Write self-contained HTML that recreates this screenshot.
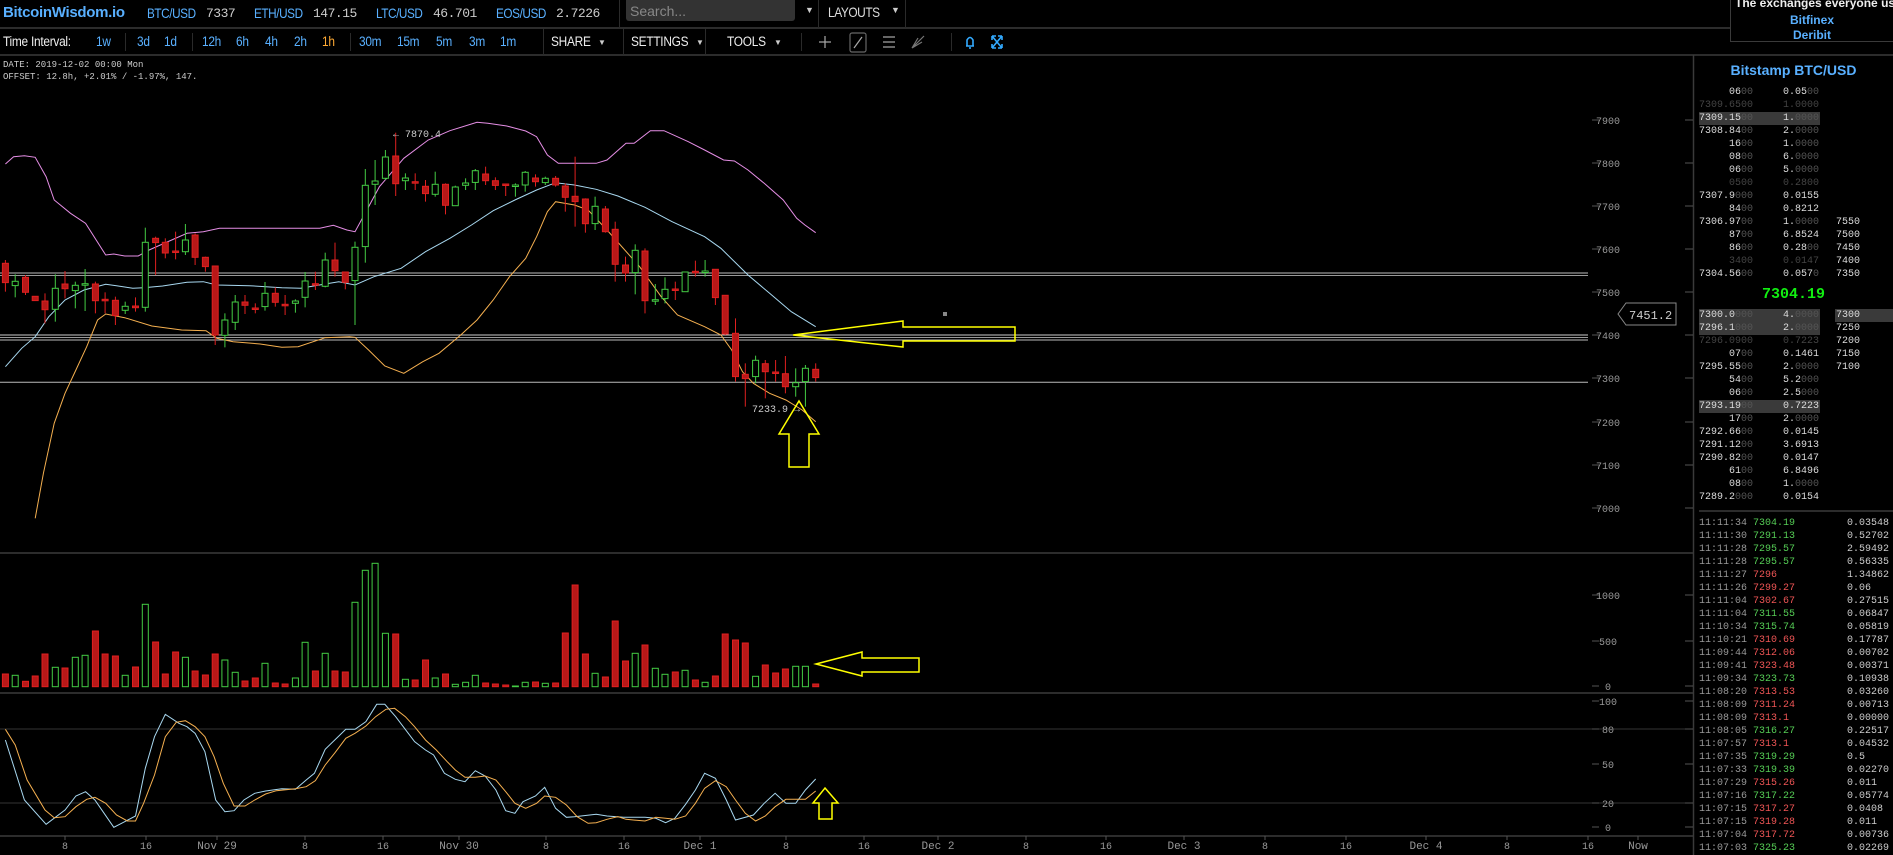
<!DOCTYPE html>
<html><head><meta charset="utf-8"><style>
html,body{margin:0;padding:0;background:#000;width:1893px;height:855px;overflow:hidden}
body{position:relative;font-family:"Liberation Sans",sans-serif;color:#ddd}
.a{position:absolute;white-space:pre}
.t{font-size:14px;top:5px;color:#59b0ff;letter-spacing:-0.5px;transform:scaleX(.84);transform-origin:left}
.m{font-family:"Liberation Mono",monospace;color:#ccc;font-size:13px;letter-spacing:-0.5px}
.tb{font-size:13.5px;top:34px;color:#59b0ff;letter-spacing:-0.3px;transform:scaleX(.88);transform-origin:left}
.w{color:#eee}
.dv{position:absolute;width:1px;background:#2a2a2a}
.ob{position:absolute;font-family:"Liberation Mono",monospace;font-size:10px;line-height:13px;white-space:pre;color:#ddd}
.d{color:#555}
.dd{color:#444}
.hl{background:#3a3a3a}
.g{color:#4c4}.r{color:#e44}
</style></head><body>
<svg id="s" width="1893" height="855" style="position:absolute;left:0;top:0" xmlns="http://www.w3.org/2000/svg">
<g stroke="#3a3a3a" stroke-width="1.5">
<line x1="0" y1="28" x2="1730" y2="28"/>
<line x1="0" y1="55" x2="1893" y2="55"/>
<line x1="1693.5" y1="55" x2="1693.5" y2="855"/>
<line x1="0" y1="553" x2="1693" y2="553"/>
<line x1="0" y1="693" x2="1693" y2="693"/>
<line x1="0" y1="836" x2="1693" y2="836"/>
<line x1="1699" y1="511" x2="1893" y2="511"/>
</g>
<g stroke="#333" stroke-width="1">
<line x1="0" y1="729" x2="1693" y2="729"/>
<line x1="0" y1="803" x2="1693" y2="803"/>
</g>
<g id="ax" font-family="Liberation Mono,monospace" font-size="10" fill="#999" text-anchor="middle"></g>
<g id="hl" fill="none"></g>
<g id="ln" fill="none" stroke-width="1"></g>
<g id="cd"></g>
<g id="vl"></g>
<g id="ind" fill="none" stroke-width="1"></g>
<g fill="none" stroke="#ff0" stroke-width="1.5">
<polygon points="793,335 903,321 903,327 1015,327 1015,341 903,341 903,347"/>
<polygon points="799,401 819,434 809,434 809,467 789,467 789,434 779,434"/>
<polygon points="816,664 862,652 862,658 919,658 919,672 862,672 862,676"/>
<polygon points="825,788 838,803 832,803 832,819 819,819 819,803 813,803"/>
</g>
<rect x="943" y="312" width="4" height="4" fill="#888"/>
<g font-family="Liberation Mono,monospace" font-size="10" fill="#ccc">
<text x="393" y="137">← 7870.4</text>
<text x="752" y="412">7233.9 →</text>
</g>
<polygon points="1618,314 1626,303 1676,303 1676,325 1626,325" fill="#000" stroke="#888"/>
<text x="1629" y="319" font-family="Liberation Mono,monospace" font-size="12" fill="#ccc">7451.2</text>
<g stroke="#aaa" stroke-width="1.2" fill="none">
<line x1="825" y1="36" x2="825" y2="48"/><line x1="819" y1="42" x2="831" y2="42"/>
<rect x="850" y="33" width="16" height="19" rx="2" stroke="#666"/><line x1="854" y1="48" x2="862" y2="37"/>
<line x1="883" y1="37" x2="895" y2="37"/><line x1="883" y1="42" x2="895" y2="42"/><line x1="883" y1="47" x2="895" y2="47"/>
<path d="M912 48 L924 36 M912 48 L922 42 M912 48 L918 38" stroke="#777"/>
</g>
<g stroke="#3af" stroke-width="1.6" fill="none">
<path d="M966 46 L974 46 M967 46 L967 40 Q970 35 973 40 L973 46 M970 47 L970 49"/>
<path d="M992 36 L1002 48 M1002 36 L992 48 M992 36 h4 M992 36 v4 M1002 36 h-4 M1002 36 v4 M992 48 h4 M992 48 v-4 M1002 48 h-4 M1002 48 v-4"/>
</g>
</svg>

<div class="a" style="left:3px;top:4px;font-size:15px;font-weight:bold;color:#59b0ff;letter-spacing:-0.3px">BitcoinWisdom.io</div>
<div class="a t" style="left:147px">BTC/USD</div><div class="a m" style="left:206px;top:6px">7337</div>
<div class="a t" style="left:254px">ETH/USD</div><div class="a m" style="left:313px;top:6px">147.15</div>
<div class="a t" style="left:376px">LTC/USD</div><div class="a m" style="left:433px;top:6px">46.701</div>
<div class="a t" style="left:496px">EOS/USD</div><div class="a m" style="left:556px;top:6px">2.7226</div>
<div class="a" style="left:626px;top:0;width:169px;height:21px;background:#333;border-radius:0 0 3px 3px"></div>
<div class="a" style="left:630px;top:3px;font-size:14px;color:#888">Search...</div>
<div class="dv" style="left:619px;top:0;height:28px"></div>
<div class="a" style="left:805px;top:5px;font-size:9px;color:#ccc">▼</div>
<div class="dv" style="left:818px;top:0;height:28px"></div>
<div class="a" style="left:828px;top:4px;font-size:14px;color:#ddd;letter-spacing:-0.5px;transform:scaleX(.85);transform-origin:left">LAYOUTS</div>
<div class="a" style="left:891px;top:5px;font-size:9px;color:#ccc">▼</div>
<div class="dv" style="left:905px;top:0;height:28px"></div>
<div class="a" style="left:1730px;top:0;width:162px;height:41px;border:1px solid #3a3a3a;border-top:none;background:#000;overflow:hidden">
<div style="position:absolute;left:4px;top:-4px;font-size:12px;font-weight:bold;color:#eee;white-space:nowrap">The exchanges everyone us</div>
<div style="position:absolute;left:0;width:162px;top:13px;text-align:center;font-size:12px;font-weight:bold;color:#59b0ff">Bitfinex</div>
<div style="position:absolute;left:0;width:162px;top:28px;text-align:center;font-size:12px;font-weight:bold;color:#59b0ff">Deribit</div>
</div>

<div class="a tb w" style="left:3px">Time Interval:</div>
<div class="a tb" style="left:96px">1w</div><div class="dv" style="left:125px;top:33px;height:18px"></div>
<div class="a tb" style="left:137px">3d</div><div class="a tb" style="left:164px">1d</div><div class="dv" style="left:192px;top:33px;height:18px"></div>
<div class="a tb" style="left:202px">12h</div><div class="a tb" style="left:236px">6h</div><div class="a tb" style="left:265px">4h</div><div class="a tb" style="left:294px">2h</div><div class="a tb" style="left:322px;color:#fa3">1h</div>
<div class="dv" style="left:350px;top:33px;height:18px"></div>
<div class="a tb" style="left:359px">30m</div><div class="a tb" style="left:397px">15m</div><div class="a tb" style="left:436px">5m</div><div class="a tb" style="left:469px">3m</div><div class="a tb" style="left:500px">1m</div>
<div class="dv" style="left:543px;top:29px;height:26px"></div>
<div class="a tb w" style="left:551px">SHARE</div><div class="a" style="left:598px;top:38px;font-size:8px;color:#ccc">▼</div>
<div class="dv" style="left:623px;top:29px;height:26px"></div>
<div class="a tb w" style="left:631px">SETTINGS</div><div class="a" style="left:696px;top:38px;font-size:8px;color:#ccc">▼</div>
<div class="dv" style="left:705px;top:29px;height:26px"></div>
<div class="a tb w" style="left:727px">TOOLS</div><div class="a" style="left:774px;top:38px;font-size:8px;color:#ccc">▼</div>
<div class="dv" style="left:801px;top:33px;height:18px"></div>
<div class="dv" style="left:951px;top:33px;height:18px"></div>

<div class="a" style="left:3px;top:59px;font-family:'Liberation Mono',monospace;font-size:9px;color:#ccc;line-height:12px">DATE: 2019-12-02 00:00 Mon
OFFSET: 12.8h, +2.01% / -1.97%, 147.</div>

<div class="a" style="left:1694px;width:199px;top:62px;text-align:center;font-size:14px;font-weight:bold;color:#59b0ff">Bitstamp BTC/USD</div>
<div class="a" style="left:1694px;width:199px;top:286px;text-align:center;font-family:'Liberation Mono',monospace;font-size:15px;font-weight:bold;color:#1e1">7304.19</div>
<div id="ob"></div>

<script>
var NS="http://www.w3.org/2000/svg";
function el(p,t,a){var e=document.createElementNS(NS,t);for(var k in a)e.setAttribute(k,a[k]);document.getElementById(p).appendChild(e);return e;}
function tx(p,x,y,s,a){var e=el(p,'text',Object.assign({x:x,y:y},a||{}));e.textContent=s;}
var py=[[7900,120],[7800,163],[7700,206],[7600,249],[7500,292],[7400,335],[7300,378],[7200,422],[7100,465],[7000,508],
[1000,595],[500,641],[0,686],[100,701],[80,729],[50,764],[20,803],[0,827]];
py.forEach(function(v){tx('ax',1608,v[1]+4,String(v[0]));el('ax','line',{x1:1592,x2:1599,y1:v[1],y2:v[1],stroke:'#555'});el('ax','line',{x1:1685,x2:1693,y1:v[1],y2:v[1],stroke:'#555'});});
var tl=[[65,'8'],[146,'16'],[217,'Nov 29'],[305,'8'],[383,'16'],[459,'Nov 30'],[546,'8'],[624,'16'],[700,'Dec 1'],[786,'8'],[864,'16'],[938,'Dec 2'],[1026,'8'],[1106,'16'],[1184,'Dec 3'],[1265,'8'],[1346,'16'],[1426,'Dec 4'],[1507,'8'],[1588,'16'],[1638,'Now']];
tl.forEach(function(v){tx('ax',v[0],849,v[1],{'font-size':v[1].length>2?11:10});el('ax','line',{x1:v[0],x2:v[0],y1:836,y2:840,stroke:'#555'});});
[[273,'#bbb'],[275.5,'#999'],[335,'#ccc'],[337.5,'#999'],[340,'#bbb'],[382.3,'#bbb']].forEach(function(v){el('hl','line',{x1:0,x2:1588,y1:v[0],y2:v[0],stroke:v[1],'stroke-width':1});});
function pl(g,pts,col,oy){var s=pts.map(function(p){return (p[0]/1.845).toFixed(1)+','+(oy+p[1]/3).toFixed(1)}).join(' ');el(g,'polyline',{points:s,stroke:col});}
pl('ln',[[10,222],[25,200],[45,197],[65,202],[85,260],[100,330],[130,370],[158,400],[195,495],[210,492],[230,498],[255,498],[275,480],[300,462],[345,430],[375,425],[405,415],[500,415],[590,415],[615,406],[640,420],[655,425],[675,365],[700,290],[745,205],[790,150],[830,122],[880,97],[900,100],[935,108],[970,123],[990,140],[1010,195],[1030,220],[1100,220],[1120,210],[1155,160],[1170,160],[1200,122],[1225,122],[1270,155],[1300,180],[1335,210],[1355,213],[1380,240],[1410,280],[1445,330],[1470,385],[1485,405],[1505,428]],'#e58ee5',90);
pl('ln',[[10,830],[40,775],[65,740],[90,680],[120,630],[155,600],[195,583],[215,587],[245,595],[265,593],[300,588],[345,577],[375,575],[400,585],[460,587],[520,593],[555,595],[600,582],[625,575],[655,585],[690,560],[740,535],[785,485],[830,445],[870,405],[910,362],[950,330],[990,300],[1025,278],[1060,285],[1100,298],[1140,318],[1190,352],[1240,395],[1300,440],[1330,475],[1380,555],[1420,610],[1460,665],[1505,710]],'#a8d8f0',90);
pl('ln',[[65,1285],[80,1150],[100,1000],[120,910],[140,840],[160,770],[180,690],[195,672],[230,683],[280,708],[335,720],[380,722],[400,745],[430,755],[480,762],[520,772],[550,770],[600,743],[645,740],[655,742],[680,780],[710,828],[745,850],[780,815],[810,790],[850,735],[880,690],[910,630],[940,560],[970,505],[990,440],[1010,365],[1025,335],[1060,345],[1085,360],[1120,420],[1180,530],[1220,620],[1250,675],[1300,710],[1330,735],[1350,780],[1370,845],[1390,880],[1420,910],[1450,930],[1480,960],[1505,995]],'#f5b050',90);
var C=[[10,'r',520,578,510,605],[28,'g',574,587,553,622],[47,'r',562,607,555,615],[65,'r',619,632,619,632],[83,'r',633,659,610,700],[102,'g',595,658,553,695],[120,'r',582,596,543,625],[139,'g',586,602,575,655],[157,'g',581,583,537,663],[176,'r',582,632,575,670],[194,'r',628,630,607,670],[213,'r',631,677,620,705],[231,'g',649,661,635,672],[250,'r',648,653,622,665],[268,'g',457,652,413,665],[287,'r',445,458,440,555],[305,'r',457,489,445,505],[324,'r',483,485,425,508],[342,'g',450,485,402,495],[360,'r',435,502,430,525],[379,'r',502,530,500,545],[397,'r',528,735,528,765],[415,'g',690,736,670,772],[434,'g',636,697,615,720],[452,'r',636,646,615,672],[471,'r',654,656,640,670],[489,'g',610,650,576,662],[508,'r',610,637,592,650],[526,'r',643,645,615,675],[545,'g',633,640,628,668],[563,'g',573,622,546,652],[582,'r',581,585,545,600],[600,'g',510,589,488,592],[618,'r',510,542,458,560],[637,'r',546,577,545,598],[655,'g',472,572,455,705],[674,'g',286,470,237,518],[692,'g',273,283,210,345],[711,'g',201,265,180,270],[730,'r',198,281,128,318],[748,'g',264,272,250,300],[766,'r',275,277,250,300],[785,'r',289,311,270,335],[803,'g',283,313,245,320],[822,'r',283,346,280,373],[840,'g',291,347,287,348],[859,'g',279,286,265,300],[877,'g',242,277,237,300],[896,'r',252,272,230,285],[914,'r',272,286,262,300],[933,'r',282,284,282,318],[951,'g',285,287,280,320],[969,'g',247,285,243,305],[988,'r',264,275,253,290],[1006,'g',265,278,260,285],[1025,'r',265,285,258,290],[1043,'r',288,322,280,365],[1061,'r',319,335,200,410],[1080,'r',327,401,325,428],[1098,'g',349,401,320,420],[1117,'r',357,425,348,428],[1135,'r',418,523,395,575],[1154,'r',525,549,500,575],[1172,'g',481,548,463,613],[1190,'r',483,632,475,670],[1209,'g',629,632,582,645],[1227,'g',598,626,562,640],[1246,'r',597,599,575,630],[1264,'g',546,605,545,606],[1283,'r',544,546,512,560],[1301,'g',543,545,510,560],[1320,'r',538,623,538,645],[1338,'r',616,732,616,735],[1357,'r',730,860,685,875],[1375,'r',853,866,820,950],[1394,'g',811,860,797,880],[1412,'r',821,845,810,925],[1431,'r',846,848,810,875],[1449,'r',851,890,798,910],[1468,'g',878,890,835,920],[1486,'g',835,875,825,950],[1505,'r',838,863,820,875]];
var V=[372,376,394,378,312,352,354,322,316,243,312,318,376,351,163,276,372,306,322,363,375,312,330,367,393,384,340,399,402,384,277,363,310,363,366,157,61,40,250,252,388,390,330,384,372,403,397,376,399,402,405,408,397,396,400,399,249,105,312,370,381,213,333,310,285,355,373,366,361,390,397,378,252,270,279,379,345,369,357,349,349,402];
C.forEach(function(c,i){var x=c[0]/1.845,st=c[1]=='g'?'#4c4':'#e02020';
var yt=90+c[2]/3,yb=90+c[3]/3,wt=90+c[4]/3,wb=90+c[5]/3;if(yb-yt<1.5)yb=yt+1.5;
el('cd','line',{x1:x.toFixed(1),x2:x.toFixed(1),y1:wt,y2:wb,stroke:st,'stroke-width':1});
el('cd','rect',{x:(x-3).toFixed(1),y:yt.toFixed(1),width:6,height:(yb-yt).toFixed(1),fill:c[1]=='g'?'#000':'#b81818',stroke:st,'stroke-width':1});
var vy=550+V[i]/3;el('vl','rect',{x:(x-3).toFixed(1),y:vy.toFixed(1),width:6,height:(686.7-vy).toFixed(1),fill:c[1]=='g'?'#000':'#b81818',stroke:st,'stroke-width':1});});
pl('ind',[[10,150],[45,330],[85,403],[120,360],[140,318],[158,305],[175,330],[210,412],[230,395],[250,378],[268,235],[285,140],[305,73],[330,100],[345,110],[360,130],[378,185],[398,330],[415,365],[432,362],[450,330],[470,310],[490,303],[520,296],[545,298],[565,270],[580,250],[600,178],[638,118],[655,118],[675,95],[695,43],[710,43],[730,80],[765,155],[785,180],[800,195],[820,250],[840,268],[858,275],[877,242],[895,258],[915,300],[933,362],[950,370],[965,335],[988,318],[1005,292],[1025,355],[1045,382],[1060,380],[1100,373],[1120,378],[1150,382],[1190,382],[1210,385],[1228,398],[1245,385],[1265,343],[1283,300],[1300,250],[1320,265],[1340,330],[1357,390],[1390,375],[1410,340],[1430,310],[1450,340],[1468,340],[1486,300],[1505,267]],'#a8d8f0',690);
pl('ind',[[10,118],[28,165],[50,270],[83,360],[100,383],[120,380],[140,350],[160,328],[175,322],[195,340],[215,375],[235,393],[250,393],[265,340],[285,255],[305,140],[325,97],[342,92],[360,110],[378,140],[395,200],[412,280],[432,348],[452,348],[470,330],[490,312],[510,302],[545,296],[565,290],[582,272],[600,225],[618,188],[638,145],[655,130],[675,108],[693,80],[712,58],[728,55],[748,80],[765,110],[785,150],[805,180],[825,215],[840,240],[858,262],[877,262],[895,258],[915,270],[933,305],[950,340],[970,355],[990,340],[1005,318],[1025,322],[1045,345],[1065,380],[1085,400],[1100,398],[1120,388],[1140,380],[1155,388],[1190,393],[1210,382],[1228,385],[1245,388],[1265,378],[1283,340],[1300,295],[1320,272],[1340,290],[1357,330],[1375,370],[1394,393],[1412,378],[1430,350],[1450,328],[1486,328],[1505,303]],'#f5b050',690);
var ob=document.getElementById('ob'),h='';
function row(y,p,pd,a,ad,c3,cls){var dim=cls.indexOf('dim')>=0;
var hl=cls.indexOf('hl')>=0;
if(hl)h+='<div class="ob hl" style="left:1699px;top:'+(y-6)+'px;width:121px;height:13px"></div>';
if(cls.indexOf('h3')>=0)h+='<div class="ob hl" style="left:1835px;top:'+(y-6)+'px;width:58px;height:13px"></div>';
h+='<div class="ob" style="left:1693px;top:'+(y-6)+'px;width:60px;text-align:right"><span class="'+(dim?'dd':'')+'">'+p+'</span><span class="'+(dim?'dd':'d')+'">'+pd+'</span></div>';
h+='<div class="ob" style="left:1759px;top:'+(y-6)+'px;width:60px;text-align:right"><span class="'+(dim?'dd':'')+'">'+a+'</span><span class="'+(dim?'dd':'d')+'">'+ad+'</span></div>';
if(c3)h+='<div class="ob" style="left:1836px;top:'+(y-6)+'px">'+c3+'</div>';}
var A=[['06','00','0.05','00','',''],['7309.65','00','1.','0000','','dim'],['7309.15','00','1.','0000','','hl'],['7308.84','00','2.','0000','',''],['16','00','1.','0000','',''],['08','00','6.','0000','',''],['06','00','5.','0000','',''],['05','00','0.28','00','','dim'],['7307.9','000','0.0155','','',''],['84','00','0.8212','','',''],['7306.97','00','1.','0000','7550',''],['87','00','6.8524','','7500',''],['86','00','0.28','00','7450',''],['34','00','0.0147','','7400','dim'],['7304.56','00','0.057','0','7350','']];
A.forEach(function(r,i){row(92+13*i,r[0],r[1],r[2],r[3],r[4],r[5]);});
var B=[['7300.0','000','4.','0000','7300','hl h3'],['7296.1','000','2.','0000','7250','hl'],['7296.09','00','0.7223','','7200','dim'],['07','00','0.1461','','7150',''],['7295.55','00','2.','0000','7100',''],['54','00','5.2','000','',''],['06','00','2.5','000','',''],['7293.19','00','0.7223','','','hl'],['17','00','2.','0000','',''],['7292.66','00','0.0145','','',''],['7291.12','00','3.6913','','',''],['7290.82','00','0.0147','','',''],['61','00','6.8496','','',''],['08','00','1.','0000','',''],['7289.2','000','0.0154','','','']];
B.forEach(function(r,i){row(315+13*i,r[0],r[1],r[2],r[3],r[4],r[5]);});
var T=[['11:11:34','7304.19','g','0.03548'],['11:11:30','7291.13','g','0.52702'],['11:11:28','7295.57','g','2.59492'],['11:11:28','7295.57','g','0.56335'],['11:11:27','7296','r','1.34862'],['11:11:26','7299.27','r','0.06'],['11:11:04','7302.67','r','0.27515'],['11:11:04','7311.55','g','0.06847'],['11:10:34','7315.74','g','0.05819'],['11:10:21','7310.69','r','0.17787'],['11:09:44','7312.06','r','0.00702'],['11:09:41','7323.48','r','0.00371'],['11:09:34','7323.73','g','0.10938'],['11:08:20','7313.53','r','0.03260'],['11:08:09','7311.24','r','0.00713'],['11:08:09','7313.1','r','0.00000'],['11:08:05','7316.27','g','0.22517'],['11:07:57','7313.1','r','0.04532'],['11:07:35','7319.29','g','0.5'],['11:07:33','7319.39','g','0.02270'],['11:07:29','7315.26','r','0.011'],['11:07:16','7317.22','g','0.05774'],['11:07:15','7317.27','r','0.0408'],['11:07:15','7319.28','r','0.011'],['11:07:04','7317.72','r','0.00736'],['11:07:03','7325.23','g','0.02269']];
T.forEach(function(r,i){var y=523+13*i-6;
h+='<div class="ob" style="left:1699px;top:'+y+'px;color:#999">'+r[0]+'</div>';
h+='<div class="ob" style="left:1753px;top:'+y+'px;color:'+(r[2]=='g'?'#5c5':'#e55')+'">'+r[1]+'</div>';
h+='<div class="ob" style="left:1847px;top:'+y+'px;color:#ccc">'+r[3]+'</div>';});
ob.innerHTML=h;
</script>
</body></html>
